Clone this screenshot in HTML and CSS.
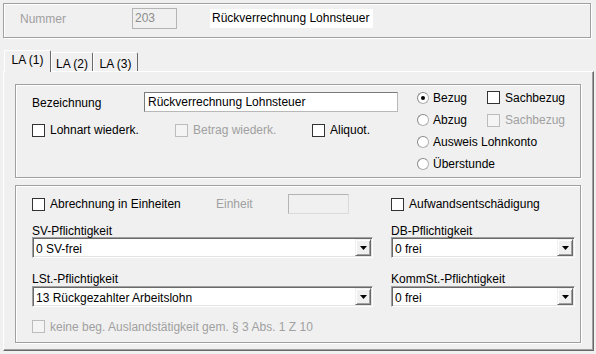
FILE: index.html
```html
<!DOCTYPE html>
<html lang="de">
<head>
<meta charset="utf-8">
<title>Lohnart</title>
<link rel="stylesheet" href="styles.css">
</head>
<body>
<div class="top">
  <span class="num-lbl">Nummer</span>
  <div class="num-field">203</div>
  <div class="name-field">Rückverrechnung Lohnsteuer</div>
</div>

<div class="tabs">
  <div class="tab active w47">LA (1)</div>
  <div class="tab w42">LA (2)</div>
  <div class="tab w45">LA (3)</div>
</div>

<div class="panel">
  <div class="group g1">
    <div class="g1-left">
      <div class="bez-row">
        <span class="bez-lbl">Bezeichnung</span>
        <div class="textbox">Rückverrechnung Lohnsteuer</div>
      </div>
      <div class="chk-row">
        <span class="chk w143"><span class="box"></span>Lohnart wiederk.</span>
        <span class="chk dis w137"><span class="box"></span>Betrag wiederk.</span>
        <span class="chk"><span class="box"></span>Aliquot.</span>
      </div>
    </div>
    <div class="g1-right">
      <div class="rrow first">
        <span class="radio-item"><span class="radio on"></span>Bezug</span>
        <span class="chk"><span class="box"></span>Sachbezug</span>
      </div>
      <div class="rrow">
        <span class="radio-item"><span class="radio"></span>Abzug</span>
        <span class="chk dis"><span class="box"></span>Sachbezug</span>
      </div>
      <div class="rrow">
        <span class="radio-item"><span class="radio"></span>Ausweis Lohnkonto</span>
      </div>
      <div class="rrow">
        <span class="radio-item"><span class="radio"></span>Überstunde</span>
      </div>
    </div>
  </div>

  <div class="group g2">
    <div class="a-left">
      <span class="chk w184"><span class="box"></span>Abrechnung in Einheiten</span>
      <span class="einheit-lbl">Einheit</span>
      <div class="einheit-input"></div>
    </div>
    <div class="a-right">
      <span class="chk"><span class="box"></span>Aufwandsentschädigung</span>
    </div>

    <div class="field">
      <div class="field-lbl">SV-Pflichtigkeit</div>
      <div class="combo"><span class="combo-text">0 SV-frei</span><span class="combo-btn"><svg width="7" height="4" viewBox="0 0 7 4"><polygon points="0,0 7,0 3.5,4" fill="#000"/></svg></span></div>
    </div>
    <div class="field">
      <div class="field-lbl">DB-Pflichtigkeit</div>
      <div class="combo"><span class="combo-text">0 frei</span><span class="combo-btn"><svg width="7" height="4" viewBox="0 0 7 4"><polygon points="0,0 7,0 3.5,4" fill="#000"/></svg></span></div>
    </div>

    <div class="field lower">
      <div class="field-lbl">LSt.-Pflichtigkeit</div>
      <div class="combo"><span class="combo-text">13 Rückgezahlter Arbeitslohn</span><span class="combo-btn"><svg width="7" height="4" viewBox="0 0 7 4"><polygon points="0,0 7,0 3.5,4" fill="#000"/></svg></span></div>
    </div>
    <div class="field lower">
      <div class="field-lbl">KommSt.-Pflichtigkeit</div>
      <div class="combo"><span class="combo-text">0 frei</span><span class="combo-btn"><svg width="7" height="4" viewBox="0 0 7 4"><polygon points="0,0 7,0 3.5,4" fill="#000"/></svg></span></div>
    </div>

    <div class="d-row">
      <span class="chk dis"><span class="box"></span>keine beg. Auslandstätigkeit gem. § 3 Abs. 1 Z 10</span>
    </div>
  </div>
</div>
</body>
</html>
```

FILE: styles.css
```css
body {
  margin: 0;
  width: 596px;
  height: 354px;
  overflow: hidden;
  background: #f0f0f0;
  font-family: "Liberation Sans", Arial, sans-serif;
  font-size: 12px;
  line-height: 14px;
  color: #000;
}

/* top group */
.top {
  margin: 3px 0 0 3px;
  width: 588px;
  height: 35px;
  box-sizing: border-box;
  border: 1px solid #a0a0a0;
  box-shadow: inset 1px 1px 0 #fff, 1px 1px 0 #fff;
  display: flex;
  align-items: center;
  padding: 4px 0 8px 16px;
}
.num-lbl {
  width: 112px;
  color: #a0a0a0;
}
.num-field {
  width: 45px;
  height: 21px;
  box-sizing: border-box;
  border: 1px solid #b4b4b4;
  background: #f0f0f0;
  color: #8c8c8c;
  padding-left: 2px;
  line-height: 19px;
}
.name-field {
  margin-left: 33px;
  width: 163px;
  height: 19px;
  box-sizing: border-box;
  background: #fff;
  padding-left: 2px;
  line-height: 19px;
  white-space: nowrap;
}

/* tabs */
.tabs {
  display: flex;
  align-items: flex-end;
  margin: 12px 0 0 4px;
  height: 21px;
  position: relative;
  z-index: 1;
}
.tab {
  box-sizing: border-box;
  height: 19px;
  border-top: 1px solid #fff;
  border-left: 1px solid #fff;
  border-right: 1px solid #696969;
  border-radius: 2px 2px 0 0;
  padding-top: 5px;
  line-height: 13px;
  text-align: center;
  background: #f0f0f0;
}
.tab.active {
  height: 22px;
  padding-top: 2px;
  line-height: 14px;
  margin-bottom: -1px;
}
.w47 { width: 47px; }
.w42 { width: 42px; }
.w45 { width: 45px; }

/* panel */
.panel {
  margin-left: 3px;
  width: 591px;
  height: 280px;
  box-sizing: border-box;
  border-top: 1px solid #fff;
  border-left: 1px solid #fff;
  border-right: 1px solid #696969;
  border-bottom: 1px solid #696969;
  box-shadow: inset -1px -1px 0 #a0a0a0;
  padding: 12px 0 0 11px;
}

.group {
  width: 566px;
  box-sizing: border-box;
  border: 1px solid #a0a0a0;
  box-shadow: inset 1px 1px 0 #fff, 1px 1px 0 #fff;
}

/* group 1 */
.g1 {
  height: 94px;
  display: flex;
}
.g1-left {
  width: 401px;
  box-sizing: border-box;
  padding: 7px 0 0 16px;
}
.g1-right {
  padding-top: 1px;
}
.bez-row {
  display: flex;
  align-items: center;
  height: 20px;
}
.bez-lbl {
  width: 112px;
  padding-top: 1px;
}
.textbox {
  width: 254px;
  height: 20px;
  box-sizing: border-box;
  border: 1px solid #b8b8b8;
  border-top-color: #7a7a7a;
  border-left-color: #7a7a7a;
  background: #fff;
  padding: 1px 0 0 3px;
  line-height: 17px;
  white-space: nowrap;
}
.chk-row {
  display: flex;
  align-items: center;
  height: 18px;
  margin-top: 9px;
}
.chk {
  display: flex;
  align-items: center;
  white-space: nowrap;
}
.box {
  flex: none;
  width: 13px;
  height: 13px;
  box-sizing: border-box;
  border: 1px solid #333;
  background: #fff;
  margin-right: 5px;
}
.chk.dis {
  color: #a0a0a0;
}
.chk.dis .box {
  border-color: #bcbcbc;
  background: #f4f4f4;
}
.w143 { width: 143px; }
.w137 { width: 137px; }
.w184 { width: 184px; }

.rrow {
  display: flex;
  align-items: center;
  height: 22px;
}
.rrow.first {
  height: 23px;
}
.radio-item {
  width: 70px;
  display: flex;
  align-items: center;
  white-space: nowrap;
}
.radio {
  flex: none;
  position: relative;
  width: 12px;
  height: 12px;
  box-sizing: border-box;
  border-radius: 50%;
  border: 1px solid #b0b0b0;
  border-top-color: #8a8a8a;
  border-left-color: #8a8a8a;
  background: #fff;
  margin-right: 4px;
}
.radio.on::after {
  content: "";
  position: absolute;
  left: 3px;
  top: 3px;
  width: 4px;
  height: 4px;
  border-radius: 50%;
  background: #000;
}

/* group 2 */
.g2 {
  height: 158px;
  margin-top: 7px;
  padding: 8px 0 0 16px;
  display: grid;
  grid-template-columns: 341px 184px;
  column-gap: 18px;
  align-content: start;
}
.a-left, .a-right {
  display: flex;
  align-items: center;
  height: 20px;
}
.einheit-lbl {
  width: 72px;
  color: #a0a0a0;
}
.einheit-input {
  width: 61px;
  height: 20px;
  box-sizing: border-box;
  border: 1px solid #dadada;
  border-top-color: #b4b4b4;
  border-left-color: #b4b4b4;
  background: #f0f0f0;
}
.field {
  margin-top: 11px;
}
.field.lower {
  margin-top: 15px;
}
.field-lbl {
  height: 12px;
  line-height: 12px;
  white-space: nowrap;
}
.lower .field-lbl {
  margin-bottom: 1px;
}
.combo {
  height: 21px;
  box-sizing: border-box;
  border: 1px solid #fff;
  border-top-color: #a0a0a0;
  border-left-color: #a0a0a0;
  box-shadow: inset 1px 1px 0 #696969, inset -1px -1px 0 #e3e3e3;
  background: #fff;
  display: flex;
  align-items: flex-start;
  padding: 1px 1px 1px 3px;
}
.combo-text {
  flex: 1;
  white-space: nowrap;
  line-height: 17px;
  padding-top: 2px;
  height: 15px;
}
.combo-btn {
  flex: none;
  width: 16px;
  height: 17px;
  box-sizing: border-box;
  background: #f0f0f0;
  border: 1px solid #696969;
  border-top-color: #f0f0f0;
  border-left-color: #f0f0f0;
  box-shadow: inset 1px 1px 0 #fff, inset -1px -1px 0 #a0a0a0;
  display: flex;
  align-items: center;
  justify-content: center;
}
.combo-btn svg {
  display: block;
  margin-top: 1px;
}
.d-row {
  grid-column: 1 / span 2;
  margin-top: 11px;
  height: 17px;
  display: flex;
  align-items: center;
}
```
